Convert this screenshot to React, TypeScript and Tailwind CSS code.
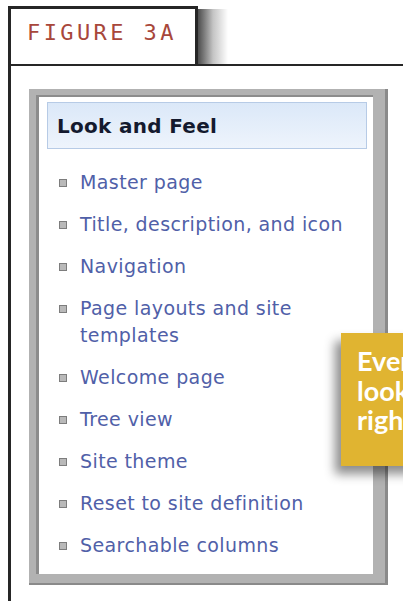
import { ReactNode } from 'react';

const links = [
  ['Master page'],
  ['Title, description, and icon'],
  ['Navigation'],
  ['Page layouts and site', 'templates'],
  ['Welcome page'],
  ['Tree view'],
  ['Site theme'],
  ['Reset to site definition'],
  ['Searchable columns'],
];

function Bullet() {
  return <span className="mt-[10px] h-[8px] w-[8px] shrink-0 border border-[#7d7d7d] bg-[#b9b9b9]" />;
}

function LinkItem({ lines }: { lines: string[] }): ReactNode {
  return (
    <li className="flex items-start gap-[13px]">
      <Bullet />
      <span className="flex flex-col leading-[27px]">
        {lines.map((line) => (
          <span key={line}>{line}</span>
        ))}
      </span>
    </li>
  );
}

export default function App() {
  return (
    <div className="relative flex h-[601px] w-[403px] flex-col overflow-hidden bg-white">
      {/* Figure tab with its drop shadow */}
      <div className="flex pl-[8px] pt-[6px]">
        <div className="flex h-[58px] w-[190px] items-start border-[3px] border-b-0 border-[#262626] bg-white pl-[16px] pt-[11px]">
          <span
            className="text-[22px] leading-[26px] tracking-[3.4px] text-[#a8473b]"
            style={{ fontFamily: '"DejaVu Sans Mono", monospace' }}
          >
            FIGURE 3A
          </span>
        </div>
        <div className="mt-[3px] h-[55px] w-[30px] bg-gradient-to-r from-[#4e4e4e] via-[#c4c4c4] to-white" />
      </div>

      {/* Page body */}
      <div className="ml-[8px] flex-1 border-l-[3px] border-t-[2px] border-[#262626] pl-[18px] pt-[23px]">
        <div className="w-[359px] border-b-[2px] border-r-[3px] border-[#8a8a8a] bg-[#b2b2b2] pb-[9px] pl-[7px] pr-[12px] pt-[6px]">
          <div
            className="h-[479px] border-l-[3px] border-t-[2px] border-[#8c8c8c] bg-white pl-[8px] pr-[6px] pt-[5px]"
            style={{ fontFamily: '"DejaVu Sans", Verdana, sans-serif' }}
          >
            <div className="flex h-[47px] items-center border border-[#b7cbe6] bg-gradient-to-b from-[#dbe8f8] to-[#eef4fc] pl-[9px]">
              <span className="text-[20px] font-bold tracking-[0.3px] text-[#141a2e]">Look and Feel</span>
            </div>
            <ul className="flex flex-col gap-[15px] pl-[12px] pt-[20px] text-[19px] tracking-[0.4px] text-[#5060a8]">
              {links.map((lines) => (
                <LinkItem key={lines[0]} lines={lines} />
              ))}
            </ul>
          </div>
        </div>
      </div>

      {/* Callout note */}
      <div
        className="absolute left-[341px] top-[333px] h-[133px] w-[90px] bg-[#e0b431] pl-[16px] pt-[13px] text-[27px] font-bold leading-[29.5px] text-white shadow-[-6px_8px_10px_rgba(0,0,0,0.45)]"
        style={{ fontFamily: 'Lato, sans-serif' }}
      >
        <div>Every</div>
        <div>looks</div>
        <div>right</div>
      </div>
    </div>
  );
}
